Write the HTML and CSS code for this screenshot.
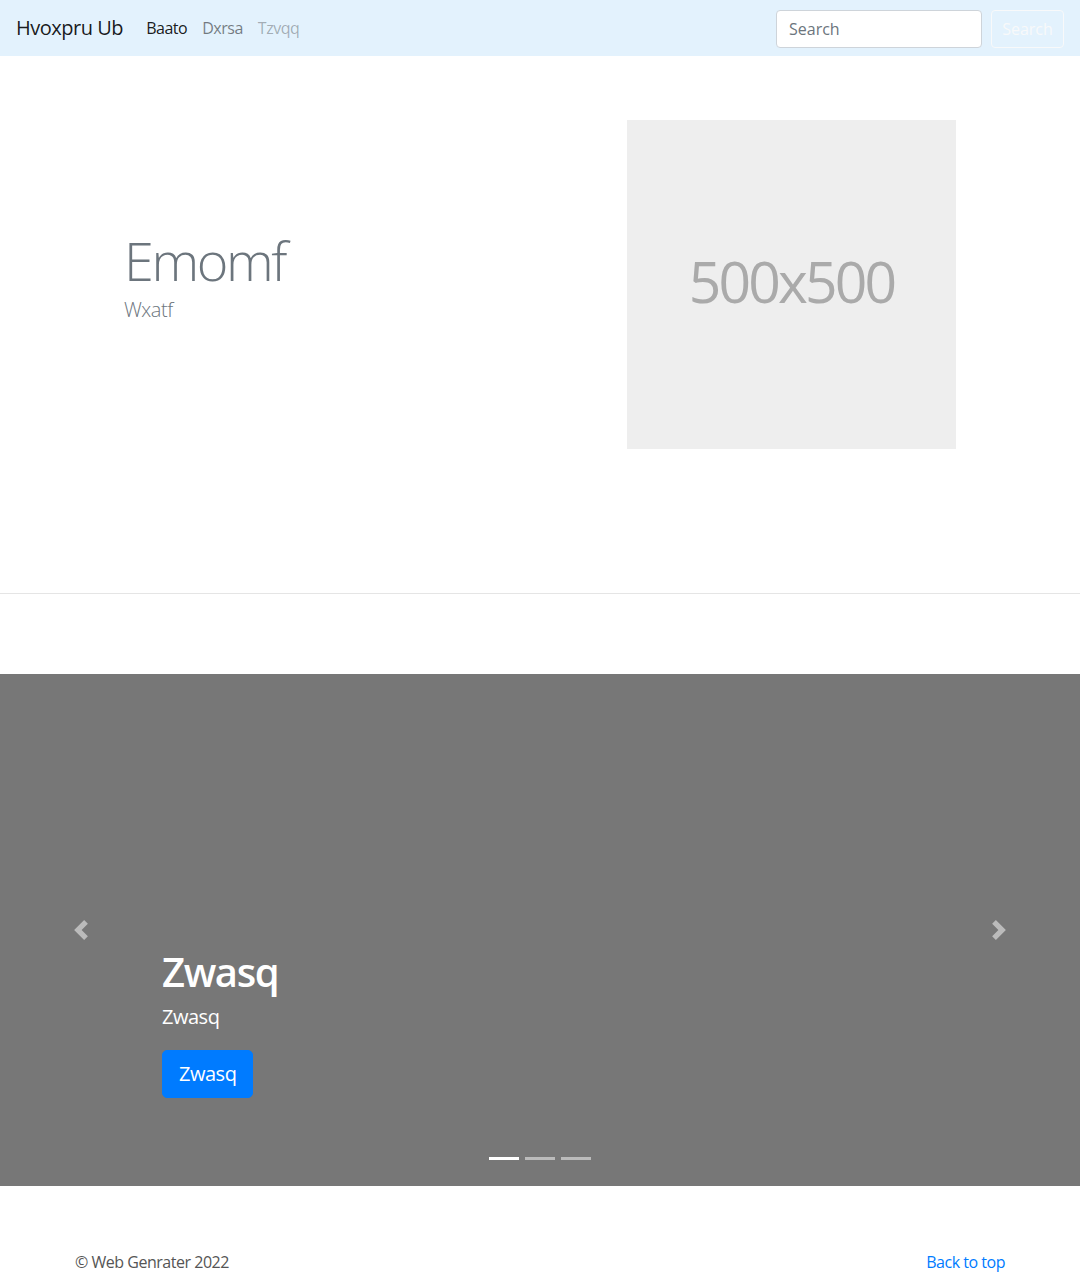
FILE: index.html
```html
<!DOCTYPE html>
<html lang="en">
<head>
<meta charset="utf-8">
<title>Hvoxpru Ub</title>
<link rel="stylesheet" href="styles.css">
</head>
<body>
<nav class="navbar">
  <a class="brand" href="#">Hvoxpru Ub</a>
  <ul class="nav">
    <li><a class="nav-link active" href="#">Baato</a></li>
    <li><a class="nav-link" href="#">Dxrsa</a></li>
    <li><a class="nav-link disabled" href="#">Tzvqq</a></li>
  </ul>
  <form class="search">
    <input class="search-input" type="search" placeholder="Search">
    <button class="search-btn" type="button">Search</button>
  </form>
</nav>

<section class="hero">
  <div class="container hero-row">
    <div class="hero-text">
      <h1 class="display">Emomf</h1>
      <p class="lead">Wxatf</p>
    </div>
    <div class="placeholder"><span>500x500</span></div>
  </div>
</section>
<hr class="divider">

<div class="carousel">
  <ol class="indicators">
    <li class="ind active"></li>
    <li class="ind"></li>
    <li class="ind"></li>
  </ol>
  <div class="caption">
    <h2 class="cap-title">Zwasq</h2>
    <p class="cap-text">Zwasq</p>
    <a class="btn-primary" href="#">Zwasq</a>
  </div>
  <a class="control prev" href="#">
    <svg class="ctrl-icon" viewBox="0 0 8 8" width="20" height="20"><path d="M5.25 0l-4 4 4 4 1.5-1.5L4.25 4l2.5-2.5L5.25 0z"/></svg>
  </a>
  <a class="control next" href="#">
    <svg class="ctrl-icon" viewBox="0 0 8 8" width="20" height="20"><path d="M2.75 0l-1.5 1.5L3.75 4l-2.5 2.5L2.75 8l4-4-4-4z"/></svg>
  </a>
</div>

<footer class="container footer">
  <p class="copy">© Web Genrater 2022</p>
  <a class="top-link" href="#">Back to top</a>
</footer>
</body>
</html>
```
FILE: styles.css
```css
* { box-sizing: border-box; }
html, body { margin: 0; padding: 0; }
body {
  font-family: "Open Sans", "Noto Sans", sans-serif;
  font-size: 16px;
  line-height: 1.5;
  color: #212529;
  background: #fff;
  letter-spacing: -0.03em;
}
a { text-decoration: none; }

.navbar {
  display: flex;
  align-items: center;
  height: 56px;
  padding: 8px 16px;
  background: #e3f2fd;
}
.brand {
  font-size: 20px;
  line-height: 30px;
  padding: 5px 0;
  margin-right: 15px;
  color: rgba(0,0,0,.9);
}
.nav {
  display: flex;
  list-style: none;
  margin: 0;
  padding: 0;
}
.nav-link {
  display: block;
  padding: 8px 7px 8px 8px;
  color: rgba(0,0,0,.5);
}
.nav-link.active { color: rgba(0,0,0,.9); }
.nav-link.disabled { color: rgba(0,0,0,.3); }
.search {
  margin-left: auto;
  display: flex;
  align-items: center;
  padding-top: 1px;
}
.search-input {
  width: 206px;
  height: 38px;
  padding: 6px 12px;
  font: inherit;
  font-size: 16px;
  color: #495057;
  background: #fff;
  border: 1px solid #ced4da;
  border-radius: 4px;
  margin-right: 9px;
  outline: none;
}
.search-input::placeholder { color: #6c757d; opacity: 1; }
.search-btn {
  width: 73px;
  height: 38px;
  padding: 6px 0;
  font: inherit;
  font-size: 16px;
  color: #f8f9fa;
  background: transparent;
  border: 1px solid #f8f9fa;
  border-radius: 4px;
  text-align: center;
}

.container {
  width: 960px;
  margin: 0 auto;
  padding: 0 15px;
}
.hero {
  padding-top: 64px;
  padding-bottom: 144px;
}
.hero-row {
  display: flex;
  align-items: center;
}
.hero-text {
  padding-left: 49px;
}
.display {
  margin: 0 0 2px;
  font-size: 54px;
  font-weight: 300;
  line-height: 1.2;
  color: #6c757d;
  letter-spacing: -0.045em;
}
.lead {
  margin: 0 0 16px;
  font-size: 20px;
  font-weight: 300;
  color: #6c757d;
}
.placeholder {
  margin-left: auto;
  margin-right: 49px;
  width: 329px;
  height: 329px;
  background: #eee;
  display: flex;
  align-items: center;
  justify-content: center;
}
.placeholder span {
  font-size: 57px;
  color: #aaa;
  letter-spacing: -0.05em;
  line-height: 1;
  margin-top: -7px;
}
.divider {
  margin: 0;
  border: 0;
  border-top: 1px solid rgba(0,0,0,.1);
}

.carousel {
  position: relative;
  margin-top: 80px;
  margin-bottom: 64px;
  height: 512px;
  background: #777;
}
.caption {
  position: absolute;
  left: 162px;
  right: 162px;
  bottom: 48px;
  padding-bottom: 40px;
  color: #fff;
}
.cap-title {
  margin: 0 0 6px;
  font-size: 40px;
  font-weight: 600;
  line-height: 1.2;
  letter-spacing: -0.035em;
}
.cap-text {
  margin: 0 0 18px;
  font-size: 20px;
  line-height: 30px;
}
.btn-primary {
  display: inline-block;
  padding: 8px 16px;
  font-size: 20px;
  line-height: 30px;
  color: #fff;
  background: #007bff;
  border: 1px solid #007bff;
  border-radius: 5px;
}
.control {
  position: absolute;
  top: 0;
  bottom: 0;
  width: 162px;
  display: flex;
  align-items: center;
  justify-content: center;
  opacity: .5;
}
.control.prev { left: 0; }
.control.next { right: 0; }
.ctrl-icon { fill: #fff; display: block; }
.indicators {
  position: absolute;
  left: 0;
  right: 0;
  bottom: 0;
  margin: 0 0 16px;
  padding: 0;
  list-style: none;
  display: flex;
  justify-content: center;
}
.ind {
  width: 30px;
  height: 3px;
  margin: 10px 3px;
  background: rgba(255,255,255,.5);
}
.ind.active { background: #fff; }

.footer {
  display: flex;
  justify-content: space-between;
}
.copy {
  margin: 0 0 16px;
  color: #555;
}
.top-link {
  color: #007bff;
  line-height: 24px;
  height: 24px;
}
```
